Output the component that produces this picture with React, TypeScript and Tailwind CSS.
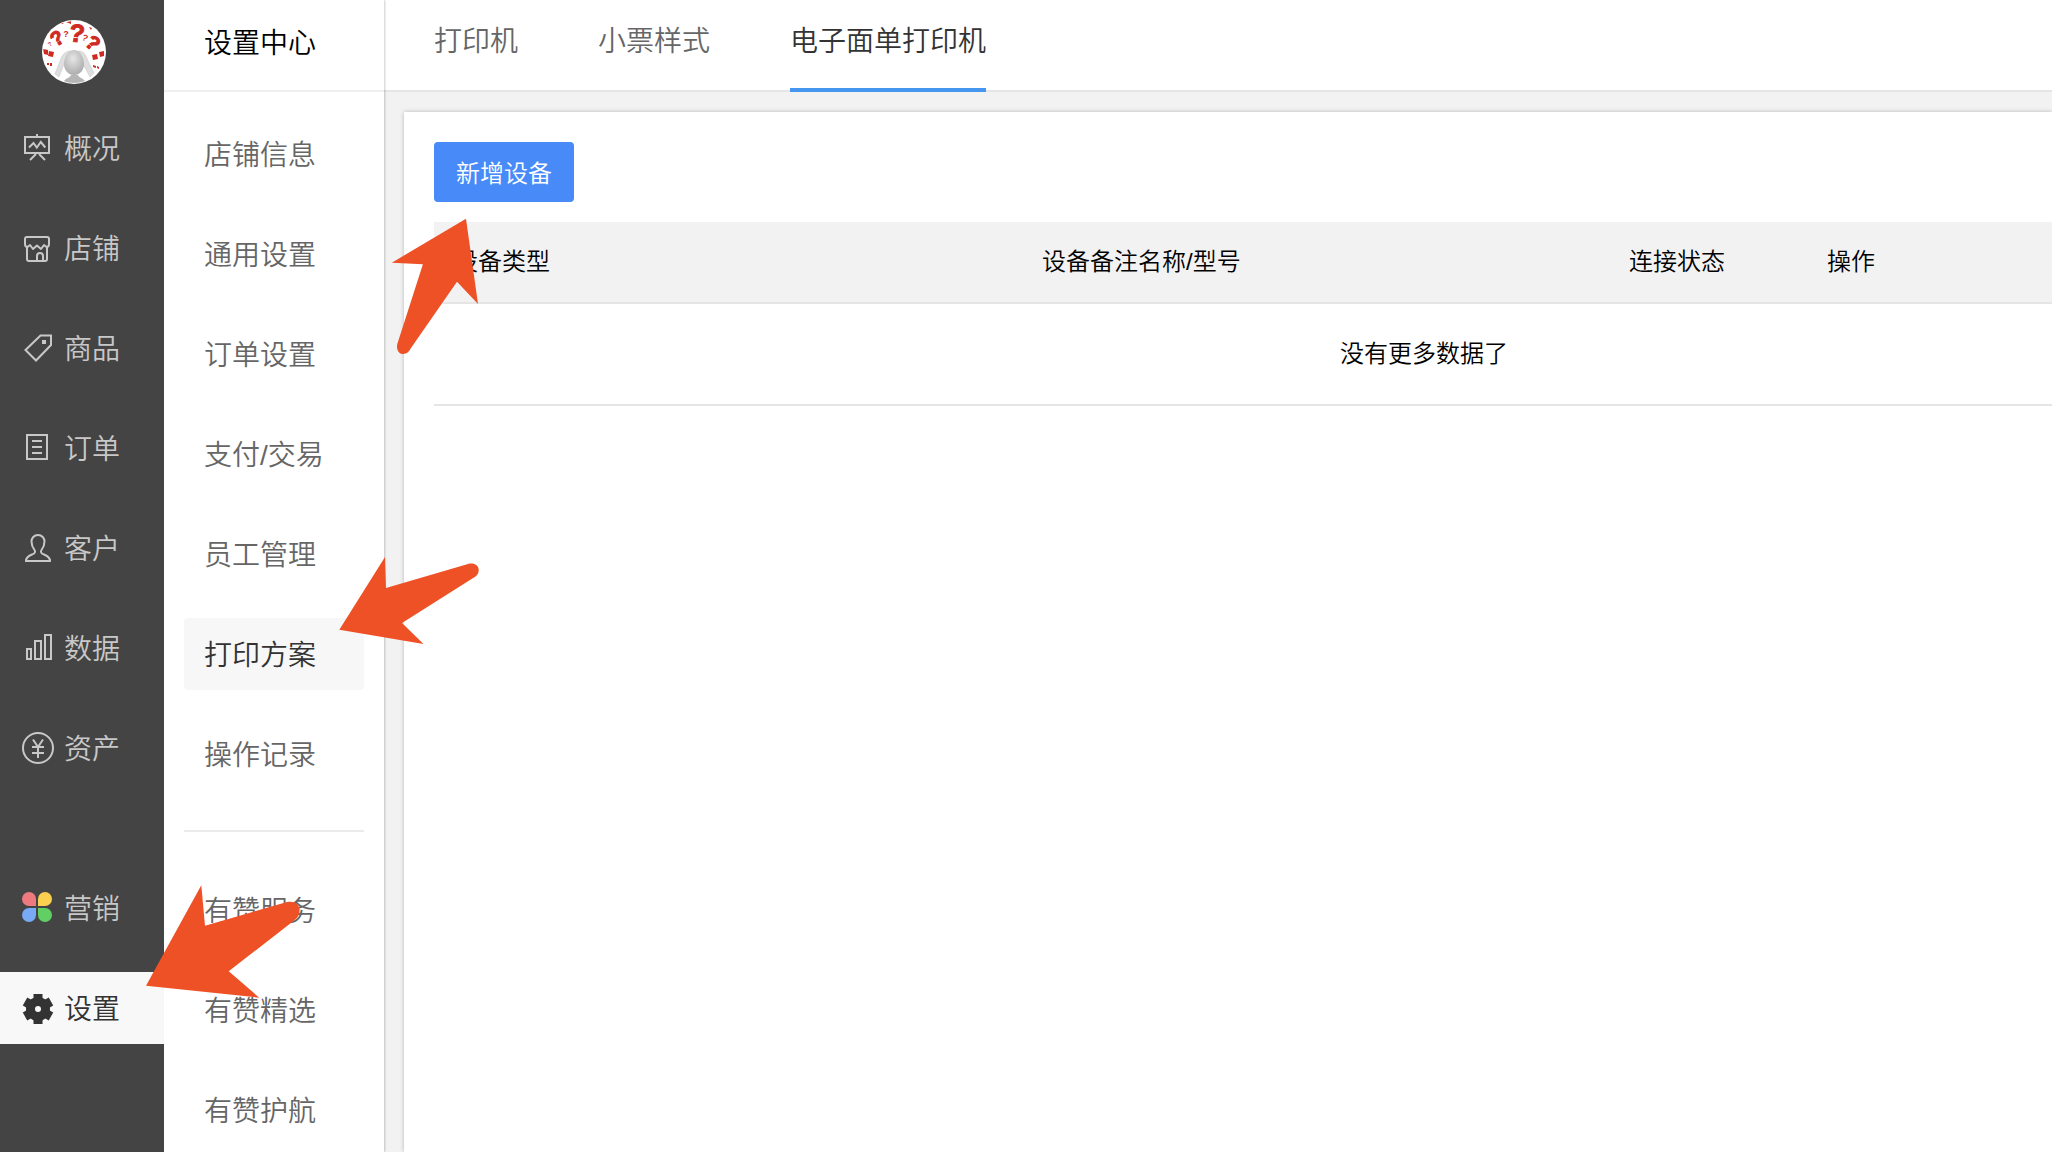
import React from 'react';

type IconProps = { children: React.ReactNode };

const LineIcon = ({ children }: IconProps) => (
  <svg className="w-8 h-8 shrink-0" viewBox="0 0 32 32" fill="none" stroke="currentColor" strokeWidth="2" aria-hidden="true">
    {children}
  </svg>
);

const OverviewIcon = () => (
  <LineIcon>
    <path d="M3 5h24v16H3zM15 2v3M7 15.5l4.5-4.5 3.3 4.5 4-5.5 4.5 5.5M14 22l-6 6M17 22l6 6" />
  </LineIcon>
);

const ShopIcon = () => (
  <LineIcon>
    <path d="M5 15V27a2 2 0 0 0 2 2h16a2 2 0 0 0 2-2V15" />
    <path d="M3 7a2 2 0 0 1 2-2h20a2 2 0 0 1 2 2v5c0 1.500-1 3-2.500 3L22 13l-3 4-4-3.500L11 17l-3-4-2.500 2C4 15 3 13.500 3 12z" strokeLinejoin="round" />
    <path d="M15 29v-5a3 3 0 0 1 6 0v5" />
  </LineIcon>
);

const GoodsIcon = () => (
  <LineIcon>
    <path d="M3.500 18L18.500 3.500H29V13L14 28.500z" />
    <path d="M20 8h4v4h-4z" fill="currentColor" stroke="none" />
  </LineIcon>
);

const OrderIcon = () => (
  <LineIcon>
    <path d="M5 3h20v24H5zM10 9h10M10 15h10M10 21h10" />
  </LineIcon>
);

const CustomerIcon = () => (
  <LineIcon>
    <path d="M16 3c-4 0-6.500 3-6.500 6.500 0 4.500 1.500 6.500 3 8.500.8 1 .8 2.500-.5 3.500C9.500 23 4 23.500 4 29h24c0-5.500-5.500-6-8-7.500-1.300-1-1.300-2.500-.5-3.500 1.500-2 3-4 3-8.500C22.500 6 20 3 16 3z" />
  </LineIcon>
);

const DataIcon = () => (
  <LineIcon>
    <path d="M5 17h4v10H5zM13 9h6v18h-6zM23 3h6v24h-6z" />
  </LineIcon>
);

const AssetIcon = () => (
  <LineIcon>
    <circle cx="16" cy="16" r="15" />
    <path d="M11 7.500l5 7.500 5-7.500M16 15v11M10 15h12M10 21h12" />
  </LineIcon>
);

const MarketingIcon = () => (
  <svg className="w-8 h-8 shrink-0" viewBox="0 0 32 32" aria-hidden="true">
    <path d="M7 0a7 7 0 0 1 7 7v7H7A7 7 0 0 1 7 0z" fill="#ee7a80" />
    <path d="M23 0a7 7 0 0 1 0 14h-7V7a7 7 0 0 1 7-7z" fill="#fad04e" />
    <path d="M7 16h7v7a7 7 0 1 1-7-7z" fill="#78aaf6" />
    <path d="M16 16h7a7 7 0 1 1-7 7z" fill="#61cf63" />
  </svg>
);

const SettingsIcon = () => (
  <svg className="w-8 h-8 shrink-0" viewBox="0 0 32 32" fill="#333" aria-hidden="true">
    <circle cx="16" cy="17" r="12" />
    {[0, 60, 120].map((deg) => (
      <rect key={deg} x="11.500" y="2" width="9" height="30" transform={`rotate(${deg} 16 17)`} />
    ))}
    <circle cx="16" cy="17" r="3" fill="#f8f8f8" />
  </svg>
);

const Avatar = () => (
  <svg className="w-16 h-16 overflow-visible" viewBox="0 0 64 64" role="img" aria-label="店铺头像">
    <defs>
      <clipPath id="avatar-clip">
        <circle cx="32" cy="32" r="31" />
      </clipPath>
      <radialGradient id="avatar-head" cx="45%" cy="35%" r="70%">
        <stop offset="0" stopColor="#e6e6e6" />
        <stop offset="1" stopColor="#a8a8a8" />
      </radialGradient>
    </defs>
    <circle cx="32" cy="32" r="32" fill="#fff" />
    <g fill="#cf2a22" fontFamily="Liberation Sans, sans-serif" fontWeight="700" textAnchor="middle">
      <text x="35" y="22" fontSize="25" stroke="#cf2a22" transform="rotate(8 35 13)">?</text>
      <text x="15" y="25" fontSize="20" stroke="#cf2a22" transform="rotate(-32 15 18)">?</text>
      <text x="51" y="30" fontSize="20" stroke="#cf2a22" transform="rotate(42 51 23)">?</text>
      <text x="24" y="17" fontSize="9">?</text>
      <text x="43" y="21" fontSize="9" transform="rotate(25 43 18)">?</text>
      <text x="8" y="26" fontSize="6" transform="rotate(-40 8 24)">?</text>
    </g>
    <g clipPath="url(#avatar-clip)">
      <g fill="#cf2a22">
        <path d="M1 29l5 1v5l-4-1zM7 31l5 1-1 5-5-1zM50 35l5-1 1 5-5 1zM57 32l5-1v5l-4 1zM5 43h2v2H5zM8 43h2v3H8zM51 45l3 1v2l-3-1zM55 46l2 1v2l-2-1z" />
        <path d="M17 3l5-1-1 2zM24 2l5-1v3zM47 7l3 1-1 2z" />
      </g>
      <path d="M29 31c-6 0-9 4-11 10l-5 13 4 3 5-13 4-9zM36 31c6 0 8 4 10 10l6 12-4 4-7-13-4-9z" fill="#dedede" stroke="#c4c4c4" strokeWidth=".5" />
      <path d="M22 61c2-3 6-3 7-6h7c1 3 5 3 7 6l-4 3H26z" fill="#b5b5b5" />
      <path d="M32 30c6 0 10 8 10 14s-4 11-10 11-10-5-10-11 4-14 10-14z" fill="url(#avatar-head)" />
    </g>
  </svg>
);

const mainNav = [
  { label: '概况', icon: OverviewIcon },
  { label: '店铺', icon: ShopIcon },
  { label: '商品', icon: GoodsIcon },
  { label: '订单', icon: OrderIcon },
  { label: '客户', icon: CustomerIcon },
  { label: '数据', icon: DataIcon },
  { label: '资产', icon: AssetIcon },
];

const extraNav = [
  { label: '营销', icon: MarketingIcon },
  { label: '设置', icon: SettingsIcon, active: true },
];

const settingsNav = ['店铺信息', '通用设置', '订单设置', '支付/交易', '员工管理', '打印方案', '操作记录'];
const serviceNav = ['有赞服务', '有赞精选', '有赞护航'];
const tabs = ['打印机', '小票样式', '电子面单打印机'];

interface NavItemProps {
  label: string;
  icon: () => React.ReactElement;
  active?: boolean;
}

const NavItem = ({ label, icon: Icon, active = false }: NavItemProps) => (
  <a
    href="#"
    className={`flex h-18 items-center gap-2.5 pl-[22px] text-[28px] ${
      active ? 'bg-[#f8f8f8] text-[#333]' : 'text-[#c8c8c8]'
    }`}
  >
    <Icon />
    <span className="pt-[3px]">{label}</span>
  </a>
);

const SubNavItem = ({ label, active = false }: { label: string; active?: boolean }) => (
  <a
    href="#"
    className={`flex h-18 items-center rounded px-5 pt-[3px] text-[28px] ${
      active ? 'bg-[#f7f7f7] text-[#333]' : 'text-[#666]'
    }`}
  >
    {label}
  </a>
);

export default function App() {
  return (
    <div className="relative flex min-h-screen overflow-hidden bg-[#f2f2f2] font-['Liberation_Sans','Noto_Sans_CJK_SC',sans-serif] font-[350] leading-none text-black">
      {/* Main navigation */}
      <aside className="w-41 shrink-0 bg-[#444]">
        <div className="flex h-28 items-start pl-[42px] pt-5">
          <Avatar />
        </div>
        <nav className="flex flex-col gap-7">
          {mainNav.map((item) => (
            <NavItem key={item.label} {...item} />
          ))}
        </nav>
        <nav className="mt-22 flex flex-col gap-7">
          {extraNav.map((item) => (
            <NavItem key={item.label} {...item} />
          ))}
        </nav>
      </aside>

      {/* Settings navigation */}
      <aside className="z-10 w-55 shrink-0 bg-white shadow-[1px_0_2px_rgba(0,0,0,0.2)]">
        <h1 className="flex h-23 items-center border-b-2 border-[#f0f0f0] px-10 pb-0.5 text-[28px] font-[350]">设置中心</h1>
        <div className="px-5">
          <nav className="flex flex-col gap-7 pb-10 pt-[26px]">
            {settingsNav.map((label) => (
              <SubNavItem key={label} label={label} active={label === '打印方案'} />
            ))}
          </nav>
          <nav className="flex flex-col gap-7 border-t-2 border-[#ebebeb] pt-[42px]">
            {serviceNav.map((label) => (
              <SubNavItem key={label} label={label} />
            ))}
          </nav>
        </div>
      </aside>

      {/* Content */}
      <main className="flex min-w-0 flex-1 flex-col">
        <div className="flex h-23 gap-20 border-b-2 border-[#e5e5e5] bg-white pl-[50px]">
          {tabs.map((tab) => {
            const active = tab === '电子面单打印机';
            return (
              <button
                key={tab}
                type="button"
                className={`-mb-0.5 shrink-0 cursor-pointer border-b-4 pb-[5px] text-[28px] ${
                  active ? 'border-[#4496ee] text-[#333]' : 'border-transparent text-[#666]'
                }`}
              >
                {tab}
              </button>
            );
          })}
        </div>

        <section className="ml-5 mt-5 flex-1 overflow-hidden bg-white pl-[30px] pt-[30px] shadow-[0_0_4px_rgba(0,0,0,0.25)]">
          <button type="button" className="block h-15 cursor-pointer rounded bg-[#488bf8] px-[22px] pt-[3px] text-2xl leading-none text-white">
            新增设备
          </button>
          <table className="mt-5 w-[1980px] table-fixed border-separate border-spacing-0 text-2xl leading-none">
            <thead>
              <tr className="bg-[#f2f2f2] text-left *:h-[82px] *:border-b-2 *:border-[#e5e5e5] *:px-5 *:font-[350]">
                <th className="w-[588px]">设备类型</th>
                <th className="w-[587px]">设备备注名称/型号</th>
                <th className="w-[198px]">连接状态</th>
                <th>操作</th>
              </tr>
            </thead>
            <tbody>
              <tr>
                <td colSpan={4} className="h-[102px] border-b-2 border-[#e5e5e5] text-center">没有更多数据了</td>
              </tr>
            </tbody>
          </table>
        </section>
      </main>

      {/* Guide arrows */}
      <svg className="pointer-events-none absolute left-[390px] top-[216px] z-20 h-[140px] w-[90px]" viewBox="390 216 90 140" fill="#ef5126" aria-hidden="true">
        <path d="M466 218.700L391.800 262.700L422.900 264.300L397.300 344C396 350 399 354 403 354C407 354 409.500 351 411 348L457 281.700L478 304z" />
      </svg>
      <svg className="pointer-events-none absolute left-[338px] top-[556px] z-20 h-[90px] w-[142px]" viewBox="338 556 142 90" fill="#ef5126" aria-hidden="true">
        <path d="M339.300 629.700L385 557L386 588L468 564C474 562.500 478.700 565.500 478.700 570C478.700 573 477.500 575 475.500 576.500L402 623L423.500 644z" />
      </svg>
      <svg className="pointer-events-none absolute left-[144px] top-[884px] z-20 h-[116px] w-[158px]" viewBox="144 884 158 116" fill="#ef5126" aria-hidden="true">
        <path d="M146 985.700L201.300 885.300L205 925.700L287 902C294 900.500 299.600 904 299.600 910C299.600 914 298 917.500 294.700 920L228.700 971.300L259.300 997.700z" />
      </svg>
    </div>
  );
}
